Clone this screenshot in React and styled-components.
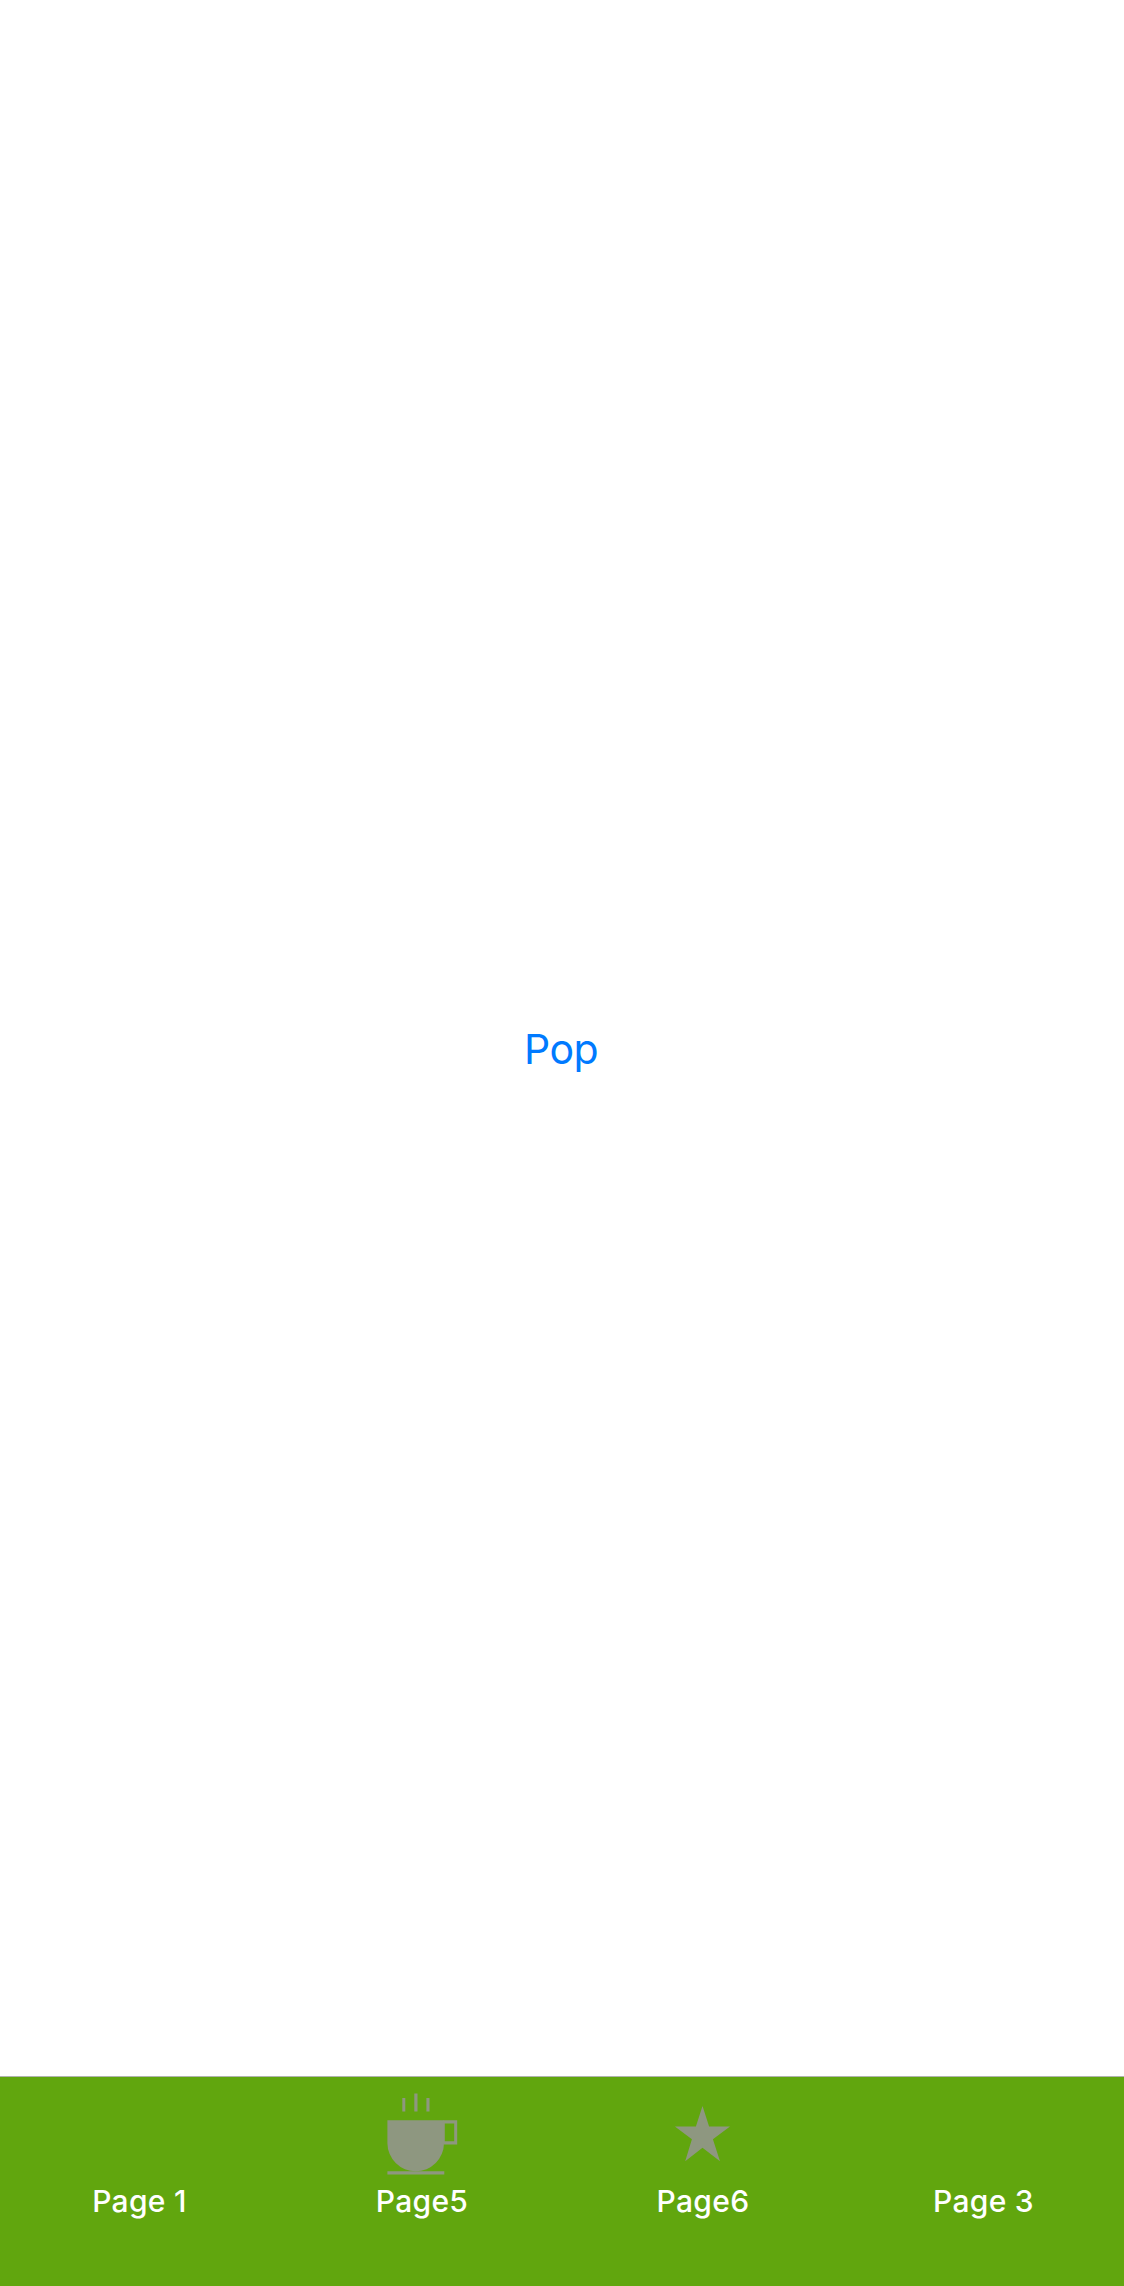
import React from "react";
import styled, { createGlobalStyle } from "styled-components";

const GlobalStyle = createGlobalStyle`
  body {
    margin: 0;
    background: #ffffff;
  }
`;

const Screen = styled.div`
  display: flex;
  flex-direction: column;
  height: 2286px;
  font-family: Inter, "Liberation Sans", sans-serif;
`;

const Content = styled.main`
  flex: 1;
  display: flex;
  align-items: center;
  justify-content: center;
  padding: 22px 2px 0 0;
`;

const PopButton = styled.button`
  border: 0;
  padding: 0;
  background: none;
  color: #007aff;
  font-family: inherit;
  font-size: 41px;
  line-height: 50px;
  letter-spacing: -0.6px;
`;

const TabBar = styled.nav`
  display: grid;
  grid-template-columns: repeat(4, 1fr);
  box-sizing: border-box;
  height: 210px;
  border-top: 1px solid #b0b3ad;
  background: #61a60e;
`;

const Tab = styled.a`
  display: flex;
  flex-direction: column;
  align-items: center;
  color: #ffffff;
`;

const IconSlot = styled.svg`
  display: block;
  width: 281px;
  height: 100px;
  fill: #8e9780;
`;

const Label = styled.span`
  margin-top: 6px;
  padding-left: ${({ $inset = 0 }) => Math.max($inset, 0)}px;
  padding-right: ${({ $inset = 0 }) => Math.max(-$inset, 0)}px;
  font-size: 30px;
  font-weight: 500;
  line-height: 36px;
  letter-spacing: 0.3px;
  white-space: pre;
`;

const CupIcon = () => (
  <>
    <path d="M121.3 21h3v13.5h-3zM133.3 16.5h3.2v18h-3.2zM145.4 21h3.1v13.5h-3.1z" />
    <path d="M106.4 43.3H163V66a28.3 28.3 0 0 1-56.6 0z" />
    <path fillRule="evenodd" d="M162.5 43.3h13.7v24.1h-13.7zM163.8 46.4v17.9h9.4V46.4z" />
    <path d="M106.4 94.3h56.9v3.1h-56.9z" />
  </>
);

const StarIcon = () => (
  <path d="M140.5 29l6.6 20.4H168l-17.1 12.8 7.1 22.1-17.5-13.6-17.3 13.6 6.7-22.1-17-12.8h21z" />
);

const tabs = [
  { label: "Page 1", inset: -2 },
  { label: "Page5", Icon: CupIcon, inset: 1 },
  { label: "Page6", Icon: StarIcon, inset: 1 },
  { label: "Page 3" },
];

export default function App() {
  return (
    <>
      <GlobalStyle />
      <Screen>
        <Content>
          <PopButton>Pop</PopButton>
        </Content>
        <TabBar>
          {tabs.map(({ label, Icon, inset }) => (
            <Tab key={label}>
              <IconSlot viewBox="0 0 281 100" aria-hidden="true">
                {Icon && <Icon />}
              </IconSlot>
              <Label $inset={inset}>{label}</Label>
            </Tab>
          ))}
        </TabBar>
      </Screen>
    </>
  );
}
